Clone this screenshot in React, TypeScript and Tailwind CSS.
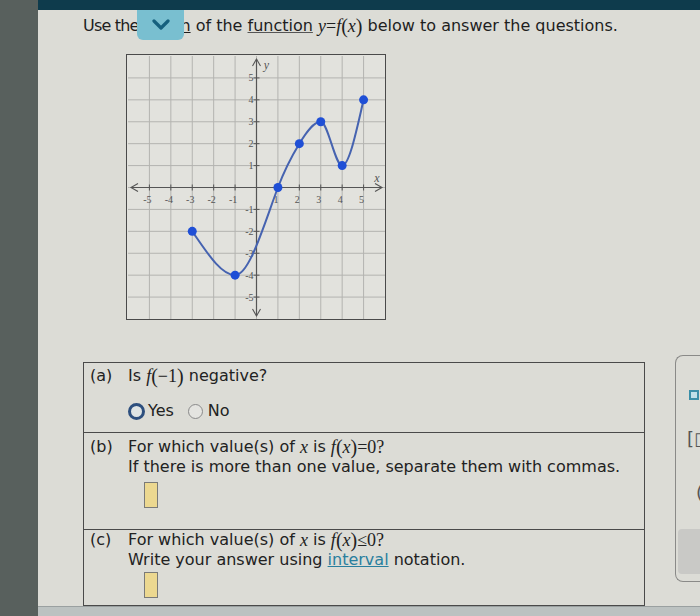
import React from "react";

const W = 257;
const H = 263;
const UX = W / 12;
const UY = H / 12;
const OX = W / 2;
const OY = H / 2;
const px = (x: number) => OX + x * UX;
const py = (y: number) => OY - y * UY;

const pts: [number, number, number][] = [
  [-3, -2, -1.4],
  [-1, -4, 0],
  [1, 0, 2.6],
  [2, 2, 1.6],
  [3, 3, 0],
  [4, 1, 0],
  [5, 4, 4.2],
];

function curvePath() {
  let d = `M ${px(pts[0][0])} ${py(pts[0][1])}`;
  for (let i = 0; i < pts.length - 1; i++) {
    const [x0, y0, m0] = pts[i];
    const [x1, y1, m1] = pts[i + 1];
    const dx = (x1 - x0) / 3;
    const c1x = x0 + dx, c1y = y0 + m0 * dx;
    const c2x = x1 - dx, c2y = y1 - m1 * dx;
    d += ` C ${px(c1x)} ${py(c1y)} ${px(c2x)} ${py(c2y)} ${px(x1)} ${py(y1)}`;
  }
  return d;
}

function Graph() {
  const lines = [];
  for (let i = 1; i < 12; i++) {
    lines.push(<line key={"v" + i} x1={i * UX} y1={0} x2={i * UX} y2={H} stroke="#b4b4b0" strokeWidth={1} />);
    lines.push(<line key={"h" + i} x1={0} y1={i * UY} x2={W} y2={i * UY} stroke="#b4b4b0" strokeWidth={1} />);
  }
  const ticks = [-5, -4, -3, -2, -1, 1, 2, 3, 4, 5];
  return (
    <svg width={W} height={H} viewBox={`0 0 ${W} ${H}`} className="block">
      <rect x={0} y={0} width={W} height={H} fill="#e2e2dd" />
      {lines}
      <line x1={3} y1={OY} x2={W - 3} y2={OY} stroke="#555" strokeWidth={1.2} />
      <line x1={OX} y1={3} x2={OX} y2={H - 3} stroke="#555" strokeWidth={1.2} />
      <path d={`M 10 ${OY - 4} L 3 ${OY} L 10 ${OY + 4}`} fill="none" stroke="#555" strokeWidth={1.1} />
      <path d={`M ${W - 10} ${OY - 4} L ${W - 3} ${OY} L ${W - 10} ${OY + 4}`} fill="none" stroke="#555" strokeWidth={1.1} />
      <path d={`M ${OX - 4} 10 L ${OX} 3 L ${OX + 4} 10`} fill="none" stroke="#555" strokeWidth={1.1} />
      <path d={`M ${OX - 4} ${H - 10} L ${OX} ${H - 3} L ${OX + 4} ${H - 10}`} fill="none" stroke="#555" strokeWidth={1.1} />
      {ticks.map((t) => (
        <g key={"t" + t}>
          <line x1={px(t)} y1={OY - 3} x2={px(t)} y2={OY + 3} stroke="#555" strokeWidth={1} />
          <line x1={OX - 3} y1={py(t)} x2={OX + 3} y2={py(t)} stroke="#555" strokeWidth={1} />
          <text x={px(t) - 2} y={OY + 15} fontSize={10} fill="#555" fontFamily="'Liberation Serif', serif" textAnchor="middle">{t}</text>
          <text x={OX - 3} y={py(t) + 3.5} fontSize={10} fill="#555" fontFamily="'Liberation Serif', serif" textAnchor="end">{t}</text>
        </g>
      ))}
      <text x={W - 8} y={OY - 6} fontSize={12} fill="#555" fontStyle="italic" fontFamily="'Liberation Serif', serif" textAnchor="middle">x</text>
      <text x={OX + 10} y={13} fontSize={12} fill="#555" fontStyle="italic" fontFamily="'Liberation Serif', serif" textAnchor="middle">y</text>
      <path d={curvePath()} fill="none" stroke="#4663b0" strokeWidth={2} />
      {pts.map(([x, y]) => (
        <circle key={"p" + x} cx={px(x)} cy={py(y)} r={4.5} fill="#1f4fd6" />
      ))}
    </svg>
  );
}

const serif = { fontFamily: "'Liberation Serif', serif" };

const M = ({ children }: { children: React.ReactNode }) => (
  <span className="italic text-[18px] leading-none font-normal" style={serif}>{children}</span>
);

const R = ({ children }: { children: React.ReactNode }) => (
  <span className="text-[18px] leading-none font-normal" style={serif}>{children}</span>
);

const Paren = ({ children }: { children: React.ReactNode }) => (
  <span className="text-[20px] leading-none font-normal" style={serif}>{children}</span>
);

function InputBox() {
  return <div className="w-[14px] h-[26px] bg-[#ecd890] border border-[#7a7a78]" />;
}

export default function App() {
  return (
    <div className="w-[700px] h-[616px] flex overflow-hidden bg-[#dcdcd6] text-[#1e1e1e]" style={{ fontFamily: "'DejaVu Sans', sans-serif" }}>
      <div className="w-[38px] h-full bg-[#58605d]" />
      <div className="flex-1 flex flex-col">
        <div className="h-[10px] bg-[#0e3b4c]" />
        <div className="flex-1 flex">
          <div className="w-[607px] flex flex-col pl-[45px]">
            <div className="relative h-[30px] flex items-center text-[16px] mt-[1px] whitespace-nowrap">
              <span className="tracking-[-0.8px]">Use the</span>
              <span>&nbsp;</span>
              <span className="underline">graph</span>
              <span>&nbsp;of the&nbsp;</span>
              <span className="underline decoration-[#555]">function</span>
              <span>&nbsp;</span>
              <M>y</M>
              <R>=</R>
              <M>f</M>
              <Paren>(</Paren>
              <M>x</M>
              <Paren>)</Paren>
              <span>&nbsp;below to answer the questions.</span>
              <div className="absolute left-[54px] top-[-1px] w-[47px] h-[30px] rounded-b-md bg-[#79bfd0] flex items-center justify-center">
                <svg width="18" height="12" viewBox="0 0 18 12">
                  <path d="M2 2 L9 9 L16 2" fill="none" stroke="#15607e" strokeWidth={3.2} strokeLinecap="round" strokeLinejoin="round" />
                </svg>
              </div>
            </div>
            <div className="ml-[43px] mt-[13px] border-[1.5px] border-[#4a4a4a] w-[260px] h-[266px] flex items-center justify-center bg-[#e2e2dd]">
              <Graph />
            </div>
            <div className="mt-[42px] border-[1.5px] border-[#4a4a4a] flex flex-col text-[16px] leading-[20px] text-[#222] whitespace-nowrap">
              <div className="h-[69px] flex flex-col pl-[6px] pt-[3px]">
                <div className="flex items-center h-[20px] gap-[10px]">
                  <span className="w-[28px]">(a)</span>
                  <span className="flex items-center">Is&nbsp;<M>f</M><Paren>(</Paren><R>−1</R><Paren>)</Paren>&nbsp;negative?</span>
                </div>
                <div className="flex items-center h-[20px] ml-[38px] mt-[15px] gap-[2px]">
                  <span className="w-[17px] h-[17px] rounded-full border-[3px] border-[#2d4f7e] bg-[#dfe4e4] inline-block" />
                  <span className="ml-[1px]">Yes</span>
                  <span className="ml-[12px] w-[15px] h-[15px] rounded-full border border-[#8a8a8a] bg-[#e4e4e0] inline-block" />
                  <span className="ml-[3px]">No</span>
                </div>
              </div>
              <div className="h-[97px] border-t-[1.5px] border-[#4a4a4a] pl-[6px] pt-[4px] flex flex-col">
                <div className="flex items-center h-[20px] gap-[10px]">
                  <span className="w-[28px]">(b)</span>
                  <span className="flex items-center">For which value(s) of&nbsp;<M>x</M>&nbsp;is&nbsp;<M>f</M><Paren>(</Paren><M>x</M><Paren>)</Paren><R>=0?</R></span>
                </div>
                <div className="ml-[38px] h-[20px] flex items-center">If there is more than one value, separate them with commas.</div>
                <div className="ml-[54px] mt-[5px]"><InputBox /></div>
              </div>
              <div className="h-[76px] border-t-[1.5px] border-[#4a4a4a] pl-[6px] pt-[0px] flex flex-col">
                <div className="flex items-center h-[20px] gap-[10px]">
                  <span className="w-[28px]">(c)</span>
                  <span className="flex items-center">For which value(s) of&nbsp;<M>x</M>&nbsp;is&nbsp;<M>f</M><Paren>(</Paren><M>x</M><Paren>)</Paren><R>≤0?</R></span>
                </div>
                <div className="ml-[38px] h-[20px] flex items-center">Write your answer using&nbsp;<span className="underline text-[#2a7f9e]">interval</span>&nbsp;notation.</div>
                <div className="ml-[54px] mt-[2px]"><InputBox /></div>
              </div>
            </div>
            <div className="flex-1" />
          </div>
          <div className="flex-1 pt-[345px]">
            <div className="ml-[30px] h-[227px] border-[1.5px] border-r-0 border-[#8a8a88] rounded-l-lg relative overflow-hidden">
              <div className="absolute left-[13px] top-[34px] w-[10px] h-[10px] border-2 border-[#3a8fa8] bg-[#bfe0e8]" />
              <div className="absolute left-[11px] top-[72px] text-[18px] leading-[22px] text-[#555] whitespace-nowrap">[□</div>
              <div className="absolute left-[20px] top-[126px] text-[18px] leading-[22px] text-[#555]">(</div>
              <div className="absolute left-[2px] top-[173px] w-[40px] h-[45px] bg-[#c9c9c6] rounded-sm" />
            </div>
          </div>
        </div>
        <div className="h-[10px] bg-[#bcc2c1] border-t border-[#9aa0a0]" />
      </div>
    </div>
  );
}
